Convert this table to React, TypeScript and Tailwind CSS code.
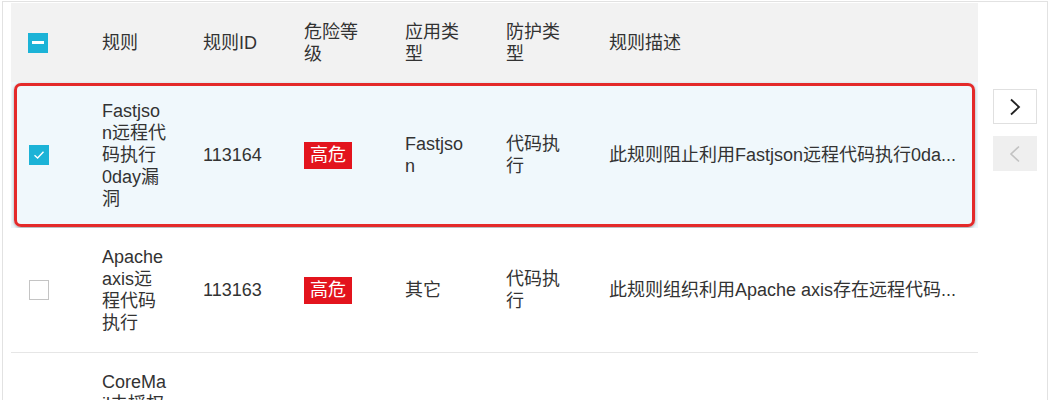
import React from "react";

interface Rule {
  id: string;
  name: string;
  level: string;
  app: string;
  kind: string;
  desc: string;
  checked: boolean;
}

const rules: Rule[] = [
  {
    id: "113164",
    name: "Fastjson远程代码执行0day漏洞",
    level: "高危",
    app: "Fastjson",
    kind: "代码执行",
    desc: "此规则阻止利用Fastjson远程代码执行0da...",
    checked: true,
  },
  {
    id: "113163",
    name: "Apache axis远程代码执行",
    level: "高危",
    app: "其它",
    kind: "代码执行",
    desc: "此规则组织利用Apache axis存在远程代码...",
    checked: false,
  },
  {
    id: "113162",
    name: "CoreMail未授权访问及敏感信息泄露漏洞",
    level: "高危",
    app: "其它",
    kind: "信息泄露",
    desc: "此规则阻止利用CoreMail未授权访问漏洞...",
    checked: false,
  },
];

const font = { fontFamily: '"Liberation Sans", "Noto Sans CJK SC", sans-serif' };

function Checkbox({ state }: { state: "on" | "off" | "some" }) {
  if (state === "off") {
    return <div className="w-[20px] h-[20px] border border-[#c4c4c4] bg-white" />;
  }
  return (
    <div className="w-[20px] h-[20px] bg-[#1cb3d7] flex items-center justify-center">
      {state === "some" ? (
        <div className="w-[12px] h-[3px] bg-white" />
      ) : (
        <svg width="12" height="10" viewBox="0 0 12 10" fill="none">
          <path d="M1.5 5.2 L4.6 8 L10.5 1.8" stroke="white" strokeWidth="1.4" />
        </svg>
      )}
    </div>
  );
}

function Cell({ children }: { children: React.ReactNode }) {
  return (
    <div className="w-[101px] shrink-0 pl-[11px]">
      <div className="w-[66px] [overflow-wrap:anywhere]">{children}</div>
    </div>
  );
}

function Row({ rule }: { rule: Rule }) {
  return (
    <div
      className={
        rule.checked
          ? "relative flex items-center py-[18px] bg-[#f0f8fc]"
          : "relative flex items-center py-[18px] bg-white border-b border-[#e6e6e6]"
      }
    >
      <div className="w-[80px] shrink-0 pl-[18px]">
        <Checkbox state={rule.checked ? "on" : "off"} />
      </div>
      <Cell>{rule.name}</Cell>
      <Cell>{rule.id}</Cell>
      <Cell>
        <span className="inline-block bg-[#e3141d] text-white px-[6px] leading-[27px]">
          {rule.level}
        </span>
      </Cell>
      <Cell>{rule.app}</Cell>
      <Cell>{rule.kind}</Cell>
      <div className="pl-[13px] whitespace-nowrap">{rule.desc}</div>
      {rule.checked && (
        <div className="absolute left-[3px] right-[3px] top-[1px] bottom-[1px] border-[3px] border-[#e42a2a] rounded-[7px] shadow-[0_1px_3px_rgba(0,0,0,0.35)]" />
      )}
    </div>
  );
}

export default function App() {
  return (
    <div className="w-[1051px] h-[400px] bg-white pl-[2px] pt-[1px] overflow-hidden" style={font}>
      <div className="w-[1046px] border-l border-t border-r border-[#e2e2e2] pl-[8px] pt-[1px] flex">
        <div className="w-[967px] shrink-0 text-[18px] leading-[22px] text-[#333]">
          <div className="flex items-center h-[79px] bg-[#f2f2f2]">
            <div className="w-[80px] shrink-0 pl-[17px]">
              <Checkbox state="some" />
            </div>
            <Cell>规则</Cell>
            <Cell>规则ID</Cell>
            <Cell>危险等级</Cell>
            <Cell>应用类型</Cell>
            <Cell>防护类型</Cell>
            <div className="pl-[13px]">规则描述</div>
          </div>
          {rules.map((r) => (
            <Row key={r.id} rule={r} />
          ))}
        </div>
        <div className="ml-[15px] pt-[86px] flex flex-col gap-[12px]">
          <button className="w-[44px] h-[35px] bg-white border border-[#e0e0e0] flex items-center justify-center">
            <svg width="12" height="18" viewBox="0 0 12 18" fill="none">
              <path d="M2 1.5 L10 9 L2 16.5" stroke="#222" strokeWidth="1.8" />
            </svg>
          </button>
          <button className="w-[44px] h-[35px] bg-[#efefef] flex items-center justify-center">
            <svg width="12" height="18" viewBox="0 0 12 18" fill="none">
              <path d="M10 1.5 L2 9 L10 16.5" stroke="#c2c2c2" strokeWidth="1.6" />
            </svg>
          </button>
        </div>
      </div>
    </div>
  );
}
